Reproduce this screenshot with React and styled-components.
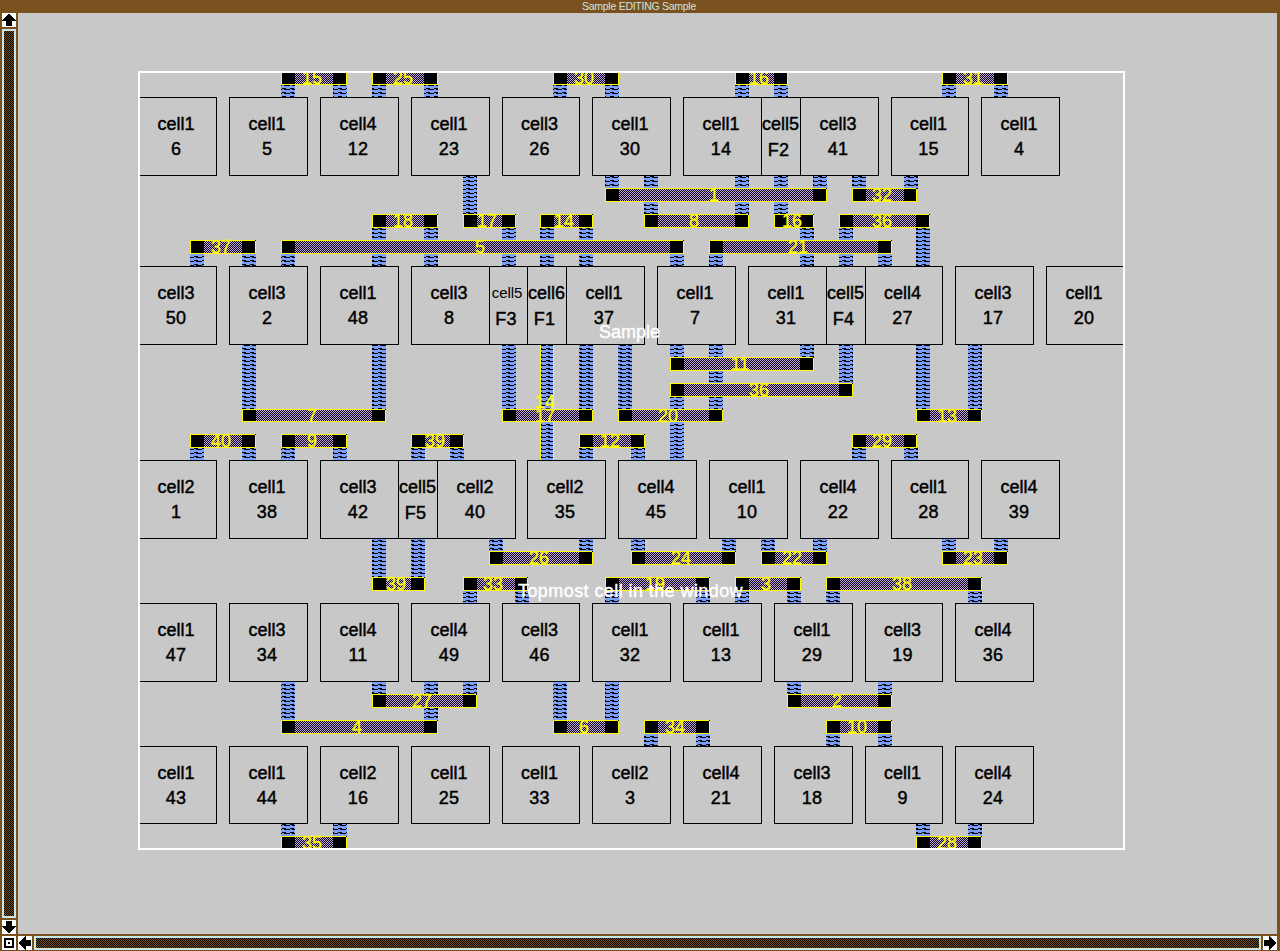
import React from "react";
import styled, { createGlobalStyle } from "styled-components";

const GlobalStyle = createGlobalStyle`
  html, body { margin: 0; background: #7a501e; overflow: hidden; }
  * { box-sizing: border-box; }
`;

const BROWN = "#7a501e";
const GREY = "#c8c8c8";
const ICE = "#c8e6e6";
const YELLOW = "#ffff00";

/* ---- lambda grid, relative to the frame's corner ---- */
const U = 12.967;
const gx = (k) => Math.floor(138.97 + U * k) - 138;
const gy = (j) => Math.floor(97.8 + U * j) - 71;

const ROWS = [
  { j: 0, cells: [[0, "cell1", "6"], [7, "cell1", "5"], [14, "cell4", "12"], [21, "cell1", "23"], [28, "cell3", "26"], [35, "cell1", "30"], [42, "cell1", "14"], [48, "cell5", "F2"], [51, "cell3", "41"], [58, "cell1", "15"], [65, "cell1", "4"]] },
  { j: 13, cells: [[0, "cell3", "50"], [7, "cell3", "2"], [14, "cell1", "48"], [21, "cell3", "8"], [27, "cell5", "F3", true], [30, "cell6", "F1"], [33, "cell1", "37"], [40, "cell1", "7"], [47, "cell1", "31"], [53, "cell5", "F4"], [56, "cell4", "27"], [63, "cell3", "17"], [70, "cell1", "20"]] },
  { j: 28, cells: [[0, "cell2", "1"], [7, "cell1", "38"], [14, "cell3", "42"], [20, "cell5", "F5"], [23, "cell2", "40"], [30, "cell2", "35"], [37, "cell4", "45"], [44, "cell1", "10"], [51, "cell4", "22"], [58, "cell1", "28"], [65, "cell4", "39"]] },
  { j: 39, cells: [[0, "cell1", "47"], [7, "cell3", "34"], [14, "cell4", "11"], [21, "cell4", "49"], [28, "cell3", "46"], [35, "cell1", "32"], [42, "cell1", "13"], [49, "cell1", "29"], [56, "cell3", "19"], [63, "cell4", "36"]] },
  { j: 50, cells: [[0, "cell1", "43"], [7, "cell1", "44"], [14, "cell2", "16"], [21, "cell1", "25"], [28, "cell1", "33"], [35, "cell2", "3"], [42, "cell4", "21"], [49, "cell3", "18"], [56, "cell1", "9"], [63, "cell4", "24"]] },
];

/* [net, first column, last column, row] */
const BARS = [
  ["15", 11, 16, -2], ["25", 18, 23, -2], ["30", 32, 37, -2], ["16", 46, 50, -2], ["31", 62, 67, -2],
  ["1", 36, 53, 7], ["32", 55, 60, 7],
  ["18", 18, 23, 9], ["17", 25, 29, 9], ["14", 31, 35, 9], ["8", 39, 47, 9], ["16", 49, 52, 9], ["36", 54, 61, 9],
  ["37", 4, 9, 11], ["5", 11, 42, 11], ["21", 44, 58, 11],
  ["11", 41, 52, 20], ["36", 41, 55, 22],
  ["7", 8, 19, 24], ["17", 28, 35, 24], ["20", 37, 45, 24], ["13", 60, 65, 24],
  ["40", 4, 9, 26], ["9", 11, 16, 26], ["39", 21, 25, 26], ["12", 34, 39, 26], ["29", 55, 60, 26],
  ["26", 27, 35, 35], ["24", 38, 46, 35], ["22", 48, 53, 35], ["23", 62, 67, 35],
  ["39", 18, 22, 37], ["33", 25, 30, 37], ["19", 36, 44, 37], ["3", 46, 51, 37], ["38", 53, 65, 37],
  ["27", 18, 26, 46], ["2", 50, 58, 46],
  ["4", 11, 23, 48], ["6", 32, 37, 48], ["34", 39, 44, 48], ["10", 53, 58, 48],
  ["35", 11, 16, 57], ["28", 60, 65, 57],
];

/* vertical runs: [row from, row to, columns] */
const RUNS = [
  [-1, 0, [11, 15, 18, 22, 32, 36, 46, 49, 62, 66]],
  [6, 9, [25, 39, 46, 49]],
  [6, 7, [36, 52, 55, 59]],
  [10, 13, [18, 22, 28, 31, 34, 51, 54, 60]],
  [12, 13, [4, 8, 11, 41, 44, 57]],
  [19, 24, [8, 18, 28, 34, 37, 44, 60, 64]],
  [19, 28, [31]],
  [19, 20, [41, 51]],
  [23, 28, [41]],
  [19, 22, [54]],
  [27, 28, [4, 8, 11, 15, 21, 24, 34, 38, 55, 59]],
  [34, 37, [18, 21]],
  [34, 35, [27, 34, 38, 45, 48, 52, 62, 66]],
  [38, 39, [25, 29, 36, 43, 46, 50, 53, 64]],
  [45, 48, [11, 22, 32, 36]],
  [45, 46, [18, 25, 50, 57]],
  [49, 50, [39, 43, 53, 57]],
  [56, 57, [11, 15, 60, 64]],
];

const Screen = styled.div`
  width: 1280px;
  height: 951px;
  display: grid;
  grid-template-columns: 18px 1259px;
  grid-template-rows: 13px 921px 17px;
  background: ${BROWN};
  font-family: "Liberation Sans", Arial, sans-serif;
`;
const TitleBar = styled.header`
  grid-column: 1 / 3;
  color: ${ICE};
  font-size: 10.5px;
  letter-spacing: -0.27px;
  line-height: 12px;
  text-align: center;
  white-space: pre;
  padding-left: 1px;
`;
const VerticalBar = styled.div`
  display: flex;
  flex-direction: column;
  gap: 2px;
  padding-left: 2px;
`;
const HorizontalBar = styled.div`
  grid-column: 1 / 3;
  display: flex;
  gap: 2px;
  padding: 2px 0 1px 2px;
`;
const TrackBox = styled.div`
  flex: 1;
  min-width: 0;
  min-height: 0;
  overflow: hidden;
  width: ${(p) => (p.$vertical ? "14px" : "auto")};
  border: 2px solid ${ICE};
  svg { display: block; }
`;
const Button = styled.div`
  width: 14px;
  height: 14px;
  flex: none;
  background: #fff;
  svg { display: block; transform: rotate(${(p) => p.$turn || 0}deg); }
`;
const Workspace = styled.main`
  background: ${GREY};
  padding: 58px 0 0 120px;
`;
const Frame = styled.div`
  position: relative;
  width: 987px;
  height: 779px;
  overflow: hidden;
  &::after {
    content: "";
    position: absolute;
    inset: 0;
    border: 2px solid #fff;
  }
`;
const Wiring = styled.svg`
  position: absolute;
  left: 0;
  top: 0;
  display: block;
`;
const CellBox = styled.div`
  position: absolute;
  border: 1px solid #000;
  display: flex;
  flex-direction: column;
  align-items: center;
  padding-top: 14px;
  color: #000;
  font-size: 18px;
  line-height: 25px;
  white-space: nowrap;
  -webkit-text-stroke: 0.45px #000;
`;
const CellName = styled.span`
  margin-left: ${(p) => (p.$narrow ? -1 : -3)}px;
  ${(p) => p.$light && "font-size: 15px; line-height: 24px; padding-bottom: 1px; -webkit-text-stroke: 0; letter-spacing: -0.1px; margin-left: -3px;"}
`;
const CellId = styled.span`
  margin-left: ${(p) => (p.$narrow ? -5 : -3)}px;
  padding-top: ${(p) => (p.$narrow ? 1 : 0)}px;
  letter-spacing: 0.2px;
`;
const NetLabel = styled.span`
  position: absolute;
  width: 40px;
  text-align: center;
  color: ${YELLOW};
  font-size: 18px;
  line-height: 20px;
  -webkit-text-stroke: 0.3px ${YELLOW};
`;
const Caption = styled.span`
  position: absolute;
  color: #fff;
  font-size: 18px;
  line-height: 20px;
  white-space: nowrap;
  letter-spacing: ${(p) => p.$track || 0}px;
  -webkit-text-stroke: 0.4px #fff;
`;

const Track = ({ vertical, id }) => (
  <TrackBox $vertical={vertical}>
    <svg width={vertical ? 10 : 1223} height={vertical ? 885 : 10} shapeRendering="crispEdges">
      <defs>
        <pattern id={id} x={vertical ? 1 : 0} width="2" height="2" patternUnits="userSpaceOnUse">
          <rect width="2" height="2" fill={BROWN} />
          <path d="M0 0h1v1h-1zM1 1h1v1h-1z" fill="#000" />
        </pattern>
      </defs>
      <rect width="100%" height="100%" fill={`url(#${id})`} />
    </svg>
  </TrackBox>
);

const Arrow = ({ turn }) => (
  <Button $turn={turn}>
    <svg width="14" height="14" viewBox="0 0 14 14" shapeRendering="crispEdges">
      <path d="M6 1h2v1h1v1h1v1h1v1h1v1h1v1h1v1h-4v5h-6v-5h-4v-1h1v-1h1v-1h1v-1h1v-1h1v-1h1z" />
    </svg>
  </Button>
);

const Run = ({ k, from, to }) => (
  <rect x={gx(k)} y={gy(from)} width="14" height={gy(to) - gy(from) + 1} fill="url(#metal)" />
);

const Bar = ({ a, b, j }) => {
  const x = gx(a);
  const y = gy(j);
  const w = gx(b) - x + 1;
  const h = gy(j + 1) - y + 1;
  const last = gx(b - 1);
  return (
    <g>
      <rect x={x} y={y} width={w} height={h} fill="url(#poly)" />
      <rect x={x} y={y} width="14" height={h} fill="#000" />
      <rect x={last} y={y} width={x + w - last} height={h} fill="#000" />
      <path
        d={`M${x} ${y}h${w}v${h}h${-w}zM${x + 1} ${y + 1}v${h - 2}h${w - 2}v${2 - h}z`}
        fillRule="evenodd"
        fill={YELLOW}
      />
      <rect x={x + w - 1} y={y} width="1" height="1" fill="#000" />
    </g>
  );
};

const Cell = ({ k, j, name, id, light }) => {
  const narrow = /cell[56]/.test(name);
  const x = gx(k);
  const y = gy(j);
  return (
    <CellBox style={{ left: x, top: y, width: gx(k + (narrow ? 3 : 6)) - x + 1, height: gy(j + 6) - y + 1 }}>
      <CellName $narrow={narrow} $light={light}>{name}</CellName>
      <CellId $narrow={narrow}>{id}</CellId>
    </CellBox>
  );
};

export default function App() {
  return (
    <Screen>
      <GlobalStyle />
      <TitleBar>Sample EDITING Sample</TitleBar>
      <VerticalBar>
        <Arrow />
        <Track vertical id="weave-v" />
        <Arrow turn={180} />
      </VerticalBar>
      <Workspace>
        <Frame>
          <Wiring width="987" height="779" shapeRendering="crispEdges">
            <defs>
              <pattern id="metal" width="8" height="4" patternUnits="userSpaceOnUse">
                <rect width="8" height="4" fill="#7aa0ff" />
                <path d="M0 1h4v1h-4zM2 2h6v1h-6z" fill="#000" />
              </pattern>
              <pattern id="poly" width="2" height="2" patternUnits="userSpaceOnUse">
                <rect width="2" height="2" fill="#c8a0f0" />
                <path d="M0 0h1v1h-1zM1 1h1v1h-1z" fill="#000" />
              </pattern>
            </defs>
            {RUNS.map(([from, to, ks]) => ks.map((k) => <Run key={`${k}-${from}`} k={k} from={from} to={to} />))}
            {[31, 32].map((k) => (
              <rect key={k} x={gx(k)} y={gy(19)} width="1" height={gy(28) - gy(19)} fill={YELLOW} />
            ))}
            {BARS.map(([n, a, b, j]) => <Bar key={`${n}-${a}-${j}`} a={a} b={b} j={j} />)}
          </Wiring>
          {ROWS.map(({ j, cells }) =>
            cells.map(([k, name, id, light]) => <Cell key={id} k={k} j={j} name={name} id={id} light={light} />)
          )}
          {BARS.map(([n, a, b, j]) => (
            <NetLabel key={`${n}-${a}-${j}`} style={{ left: Math.round((gx(a) + gx(b)) / 2) - 22, top: gy(j) - 3 }}>{n}</NetLabel>
          ))}
          <NetLabel style={{ left: 387, top: 321 }}>14</NetLabel>
          <Caption style={{ left: 461, top: 251 }}>Sample</Caption>
          <Caption $track={0.42} style={{ left: 380, top: 510 }}>Topmost cell in the window</Caption>
        </Frame>
      </Workspace>
      <HorizontalBar>
        <Button>
          <svg width="14" height="14" viewBox="0 0 14 14" shapeRendering="crispEdges">
            <path d="M2 2h10v10h-10zM4 4v6h6v-6zM6 6h2v2h-2z" fillRule="evenodd" />
          </svg>
        </Button>
        <Arrow turn={270} />
        <Track id="weave-h" />
        <Arrow turn={90} />
      </HorizontalBar>
    </Screen>
  );
}
